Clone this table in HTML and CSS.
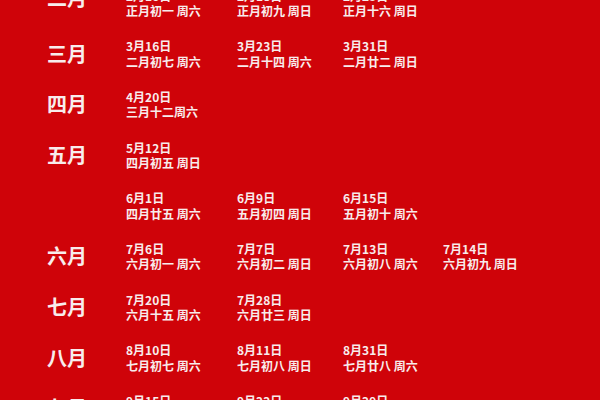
FILE: index.html
```html
<!DOCTYPE html>
<html lang="zh-CN">
<head>
<meta charset="utf-8">
<title>2024 吉日</title>
<link rel="stylesheet" href="styles.css">
</head>
<body>
<div class="table">
  <div class="row">
    <div class="month month-top">二月</div>
    <div class="cell"><div class="d">2月10日</div><div class="l">正月初一 周六</div></div>
    <div class="cell"><div class="d">2月18日</div><div class="l">正月初九 周日</div></div>
    <div class="cell"><div class="d">2月25日</div><div class="l">正月十六 周日</div></div>
  </div>
  <div class="row">
    <div class="month">三月</div>
    <div class="cell"><div class="d">3月16日</div><div class="l">二月初七 周六</div></div>
    <div class="cell"><div class="d">3月23日</div><div class="l">二月十四 周六</div></div>
    <div class="cell"><div class="d">3月31日</div><div class="l">二月廿二 周日</div></div>
  </div>
  <div class="row">
    <div class="month">四月</div>
    <div class="cell"><div class="d">4月20日</div><div class="l">三月十二周六</div></div>
  </div>
  <div class="row">
    <div class="month">五月</div>
    <div class="cell"><div class="d">5月12日</div><div class="l">四月初五 周日</div></div>
  </div>
  <div class="row">
    <div class="month"></div>
    <div class="cell"><div class="d">6月1日</div><div class="l">四月廿五 周六</div></div>
    <div class="cell"><div class="d">6月9日</div><div class="l">五月初四 周日</div></div>
    <div class="cell"><div class="d">6月15日</div><div class="l">五月初十 周六</div></div>
  </div>
  <div class="row">
    <div class="month">六月</div>
    <div class="cell"><div class="d">7月6日</div><div class="l">六月初一 周六</div></div>
    <div class="cell"><div class="d">7月7日</div><div class="l">六月初二 周日</div></div>
    <div class="cell"><div class="d">7月13日</div><div class="l">六月初八 周六</div></div>
    <div class="cell"><div class="d">7月14日</div><div class="l">六月初九 周日</div></div>
  </div>
  <div class="row">
    <div class="month">七月</div>
    <div class="cell"><div class="d">7月20日</div><div class="l">六月十五 周六</div></div>
    <div class="cell"><div class="d">7月28日</div><div class="l">六月廿三 周日</div></div>
  </div>
  <div class="row">
    <div class="month">八月</div>
    <div class="cell"><div class="d">8月10日</div><div class="l">七月初七 周六</div></div>
    <div class="cell"><div class="d">8月11日</div><div class="l">七月初八 周日</div></div>
    <div class="cell"><div class="d">8月31日</div><div class="l">七月廿八 周六</div></div>
  </div>
  <div class="row">
    <div class="month">九月</div>
    <div class="cell"><div class="d">9月15日</div><div class="l">八月十三 周日</div></div>
    <div class="cell"><div class="d">9月22日</div><div class="l">八月二十 周日</div></div>
    <div class="cell"><div class="d">9月29日</div><div class="l">八月廿七 周日</div></div>
  </div>
</div>
</body>
</html>
```

FILE: styles.css
```css
html, body {
  margin: 0;
  padding: 0;
  background: #cf0309;
  overflow: hidden;
}
body {
  width: 600px;
  height: 400px;
  font-family: "Noto Sans CJK SC", "Noto Sans", sans-serif;
  color: #f8ecec;
}
.table {
  margin-top: -12.4px;
  padding-left: 47px;
}
.row {
  display: grid;
  grid-template-columns: 79px 111px 106px 100px auto;
  align-items: start;
  height: 50.67px;
}
.month {
  height: 31px;
  display: flex;
  align-items: center;
  font-size: 20px;
  font-weight: 700;
  line-height: 20px;
}
.month-top {
  align-items: flex-start;
  height: 20px;
}
.cell {
  font-size: 12px;
  font-weight: 700;
  line-height: 15.5px;
  white-space: nowrap;
}
```
